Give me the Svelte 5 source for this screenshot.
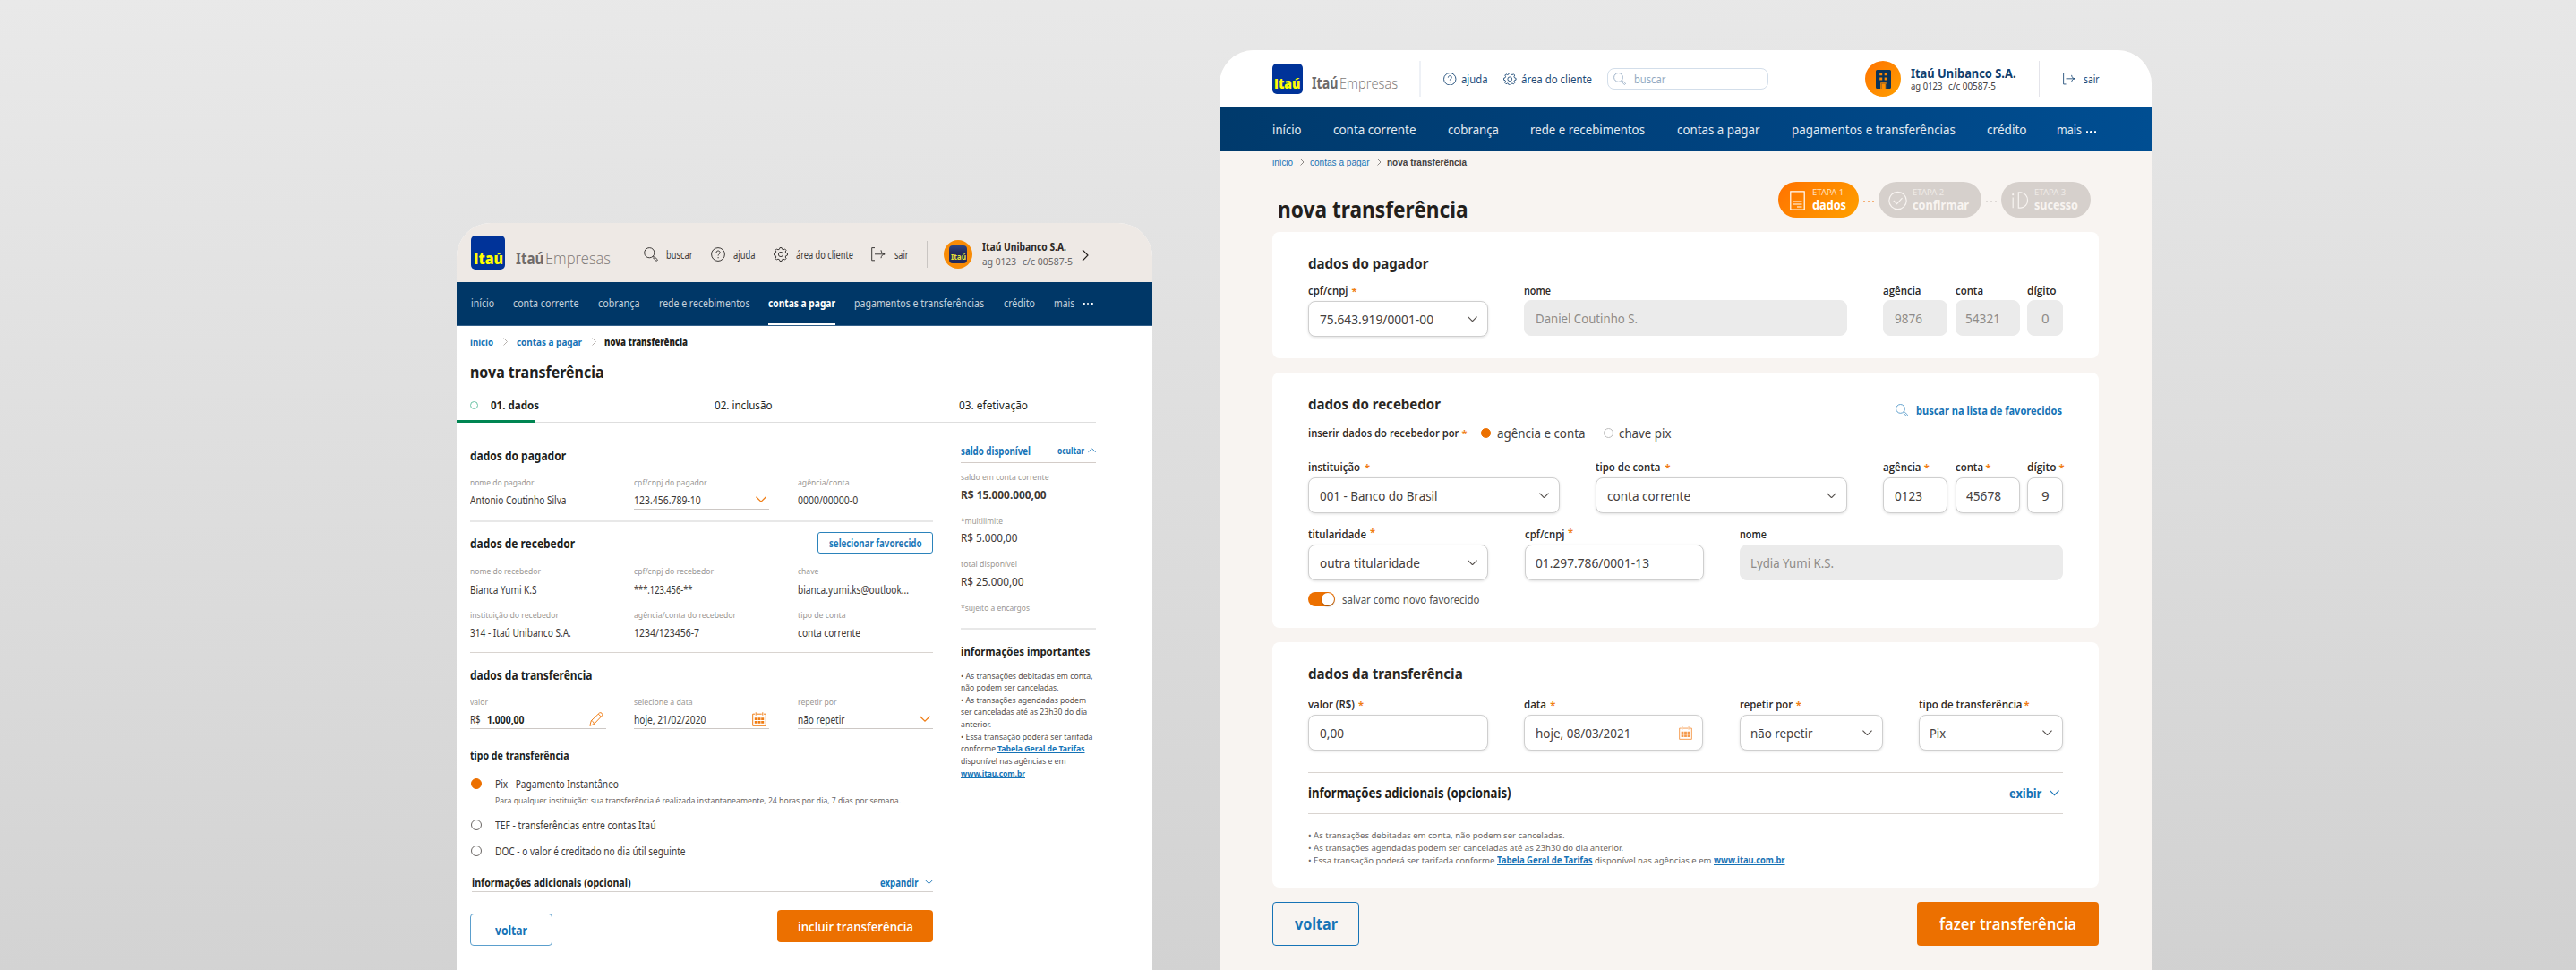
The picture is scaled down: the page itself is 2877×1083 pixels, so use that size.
<script>
  // estreita (ou alarga) o texto para ele ocupar a largura do layout
  const fit = (node, width) => {
    if (!width) return;
    node.style.width = 'max-content';
    const natural = node.getBoundingClientRect().width;
    node.style.transform = `scaleX(${width / natural})`;
    node.style.marginRight = `${width - natural}px`;
  };

  // contorno da engrenagem com 8 dentes
  const gear = Array.from({ length: 32 }, (_, i) => {
    const r = i % 4 < 2 ? 7.6 : 6;
    const shift = [-0.13, 0.13, 0.26, 0.53][i % 4];
    const a = (Math.floor(i / 4) * Math.PI) / 4 + shift;
    return `${(8 + r * Math.sin(a)).toFixed(2)},${(8 - r * Math.cos(a)).toFixed(2)}`;
  }).join(' ');

  const menu = [
    { name: 'início', w: 26, wide: 32.5 },
    { name: 'conta corrente', w: 73.5, wide: 92.5 },
    { name: 'cobrança', w: 46.5, wide: 57 },
    { name: 'rede e recebimentos', w: 101.5, wide: 128 },
    { name: 'contas a pagar', w: 75, wide: 92.5, active: true },
    { name: 'pagamentos e transferências', w: 145, wide: 183 },
    { name: 'crédito', w: 35, wide: 44.6 },
    { name: 'mais', w: 23.3, wide: 28 }
  ];

  const payer = [
    { label: 'nome do pagador', lw: 71.4, value: 'Antonio Coutinho Silva', w: 107.5 },
    { label: 'cpf/cnpj do pagador', lw: 81.5, value: '123.456.789-10', w: 74.7, icon: 'down' },
    { label: 'agência/conta', lw: 57.5, value: '0000/00000-0', w: 67.2 }
  ];
  const receiver = [
    { label: 'nome do recebedor', lw: 79, value: 'Bianca Yumi K.S', w: 74.5 },
    { label: 'cpf/cnpj do recebedor', lw: 89, value: '***.123.456-**', w: 65.5 },
    { label: 'chave', lw: 23.3, value: 'bianca.yumi.ks@outlook...', w: 124 }
  ];
  const receiverBank = [
    { label: 'instituição do recebedor', lw: 99, value: '314 - Itaú Unibanco S.A.', w: 112.8 },
    { label: 'agência/conta do recebedor', lw: 114, value: '1234/123456-7', w: 73 },
    { label: 'tipo de conta', lw: 53.6, value: 'conta corrente', w: 70 }
  ];
  const transfer = [
    { label: 'valor', lw: 20, prefix: 'R$', value: '1.000,00', w: 41.5, icon: 'pencil' },
    { label: 'selecione a data', lw: 65.7, value: 'hoje, 21/02/2020', w: 80.3, icon: 'calendar' },
    { label: 'repetir por', lw: 43.6, value: 'não repetir', w: 52.5, icon: 'down' }
  ];
  const balance = [
    { label: 'saldo em conta corrente', lw: 98.5, value: 'R$ 15.000.000,00', w: 95.5, strong: true },
    { label: '*multilimite', lw: 47, value: 'R$ 5.000,00', w: 63.5 },
    { label: 'total disponível', lw: 63, value: 'R$ 25.000,00', w: 70.5 }
  ];

  const steps = [
    { n: 1, name: 'dados', nw: 38, w: 90.5, active: true },
    { n: 2, name: 'confirmar', nw: 63, w: 115 },
    { n: 3, name: 'sucesso', nw: 49, w: 100 }
  ];

  const payerForm = [
    [{ label: 'cpf/cnpj', lw: 44.5, req: 4, value: '75.643.919/0001-00', vw: 127, w: 201, icon: 'down' }],
    [{ label: 'nome', lw: 30, value: 'Daniel Coutinho S.', vw: 114, w: 361, off: true }],
    [
      { label: 'agência', lw: 42.5, value: '9876', vw: 31, w: 72, off: true },
      { label: 'conta', lw: 31, value: '54321', vw: 39, w: 72, off: true, pad: 10 },
      { label: 'dígito', lw: 32.5, value: '0', w: 40, off: true, pad: 15 }
    ]
  ];
  const bankForm = [
    [{ label: 'instituição', lw: 58, req: 5, value: '001 - Banco do Brasil', vw: 131.5, w: 281, icon: 'down' }],
    [{ label: 'tipo de conta', lw: 72.5, req: 5, value: 'conta corrente', vw: 93, w: 281, icon: 'down', pad: 11.5 }],
    [
      { label: 'agência', lw: 42.5, req: 3, value: '0123', vw: 31, w: 72, pad: 11.5 },
      { label: 'conta', lw: 31, req: 3, value: '45678', vw: 39, w: 72, pad: 11.5 },
      { label: 'dígito', lw: 32.5, req: 3, value: '9', w: 40, pad: 15 }
    ]
  ];
  const ownerForm = [
    [{ label: 'titularidade', lw: 65, req: 4, up: true, value: 'outra titularidade', vw: 112, w: 201, icon: 'down' }],
    [{ label: 'cpf/cnpj', lw: 44.5, req: 4, up: true, value: '01.297.786/0001-13', vw: 127, w: 200 }],
    [{ label: 'nome', lw: 30, value: 'Lydia Yumi K.S.', vw: 93, w: 361, off: true, pad: 11 }]
  ];
  const transferForm = [
    [{ label: 'valor (R$)', lw: 52, req: 4, value: '0,00', vw: 27, w: 201 }],
    [{ label: 'data', lw: 25, req: 4, value: 'hoje, 08/03/2021', vw: 106.5, w: 200, icon: 'calendar' }],
    [{ label: 'repetir por', lw: 59, req: 4, value: 'não repetir', vw: 69.5, w: 160, icon: 'down' }],
    [{ label: 'tipo de transferência', lw: 115.5, req: 2, value: 'Pix', vw: 18, w: 161, icon: 'down' }]
  ];
</script>

{#snippet icon(name, size)}
  <svg class="icon" width={size} height={size} viewBox="0 0 16 16">
    {#if name === 'search'}
      <circle cx="6.3" cy="6.2" r="5.6" />
      <path d="M10.3 10.2l1 1M11.9 10.6l3.6 3.4-1.4 1.5-3.6-3.6z" />
    {:else if name === 'help'}
      <circle cx="8" cy="8" r="7.4" />
      <path d="M5.9 6.2c0-3 4.3-2.8 4.3-.2 0 1.7-2.1 1.8-2.1 3.5M8.1 11v1.3" />
    {:else if name === 'gear'}
      <circle cx="8" cy="8" r="2.6" />
      <polygon points={gear} />
    {:else if name === 'exit'}
      <path d="M4 .6H.7v14.2H4M4 7.8h11M11 3.3c.2 2.6 1.5 4 4.2 4.5-2.7.4-4 1.9-4.2 4.4" />
    {:else if name === 'pencil'}
      <path d="M.8 15.3l1.5-5.6L11.6.9c1.6-1 3.9 1 3 2.9L5.4 13.5zM2.3 9.7c1.7.2 2.9 1.6 3.1 3.8M10.3 2.1l3 3" />
    {:else if name === 'calendar'}
      <path d="M3 2.2H.7v13.1h14.6V2.2H13M5.3 2.2h5.4M4.2.3v3.4M11.8.3v3.4" />
      <path class="fill" d="M2.8 6.2h3v2.9h-3zM6.5 6.2h3v2.9h-3zM10.2 6.2h3v2.9h-3zM2.8 9.9h3v2.9h-3zM6.5 9.9h3v2.9h-3zM10.2 9.9h3v2.9h-3z" />
    {/if}
  </svg>
{/snippet}

{#snippet chevron(dir, w)}
  <svg class="icon {dir}" width={w} height={w * 0.6} viewBox="0 0 10 6">
    <path d="M.4.6l4.6 4.6L9.6.6" />
  </svg>
{/snippet}

{#snippet detail(f)}
  <div class="detail">
    <div class="cap"><span use:fit={f.lw}>{f.label}</span></div>
    <div class="val" class:line={f.icon}>
      {#if f.prefix}<div class="prefix"><span use:fit={11.5}>{f.prefix}</span></div>{/if}
      <span class:strong={f.prefix} use:fit={f.w}>{f.value}</span>
      {#if f.icon === 'down'}
        <i class="orange">{@render chevron('down', 12)}</i>
      {:else if f.icon}
        <i class="orange">{@render icon(f.icon, 16)}</i>
      {/if}
    </div>
  </div>
{/snippet}

{#snippet formRow(groups)}
  <div class="form-row">
    {#each groups as group}
      <div class="group">
        {#each group as f}
          <div class="field" class:off={f.off} style="width:{f.w}px">
            <div class="label" class:up={f.up}>
              <span use:fit={f.lw}>{f.label}</span>
              {#if f.req}<em style="margin-left:{f.req}px">*</em>{/if}
            </div>
            <div class="box" style="padding-left:{f.pad ?? 11.5}px">
              <span use:fit={f.vw}>{f.value}</span>
              {#if f.icon === 'down'}
                <i>{@render chevron('down', 11)}</i>
              {:else if f.icon}
                <i class="orange">{@render icon(f.icon, 15)}</i>
              {/if}
            </div>
          </div>
        {/each}
      </div>
    {/each}
  </div>
{/snippet}

<main>
  <section class="old">
    <header>
      <div class="logo"><span use:fit={33}>Itaú</span></div>
      <div class="brand"><b use:fit={31.5}>Itaú</b><div><span use:fit={73}>Empresas</span></div></div>
      <div class="tools">
        <a>{@render icon('search', 16)}<span use:fit={29.5}>buscar</span></a>
        <a>{@render icon('help', 16)}<span use:fit={24.5}>ajuda</span></a>
        <a>{@render icon('gear', 16)}<span use:fit={64}>área do cliente</span></a>
        <a>{@render icon('exit', 16)}<span use:fit={15.5}>sair</span></a>
      </div>
      <div class="account">
        <div class="avatar"><div class="mini"><span use:fit={17}>Itaú</span></div></div>
        <div class="who">
          <b use:fit={94}>Itaú Unibanco S.A.</b>
          <div><span use:fit={38}>ag 0123</span><span use:fit={56}>c/c 00587-5</span></div>
        </div>
        <svg class="icon" width="8" height="14" viewBox="0 0 8 14"><path d="M1 .8l6 6.2-6 6.2" /></svg>
      </div>
    </header>
    <nav>
      {#each menu as m}
        <a class:active={m.active}><span use:fit={m.w}>{m.name}</span></a>
      {/each}
      <div class="dots"><u></u><u></u><u></u></div>
    </nav>
    <div class="crumbs">
      <a use:fit={26}>início</a>
      <svg class="icon" width="5" height="9" viewBox="0 0 5 9"><path d="M.5.5l4 4-4 4" /></svg>
      <a use:fit={73}>contas a pagar</a>
      <svg class="icon" width="5" height="9" viewBox="0 0 5 9"><path d="M.5.5l4 4-4 4" /></svg>
      <b use:fit={93}>nova transferência</b>
    </div>
    <h1><span use:fit={149.5}>nova transferência</span></h1>
    <div class="tabs">
      <div class="tab"><s></s><b use:fit={54}>01. dados</b></div>
      <div class="tab"><span use:fit={64.5}>02. inclusão</span></div>
      <div class="tab"><span use:fit={77}>03. efetivação</span></div>
    </div>
    <div class="track"><div></div></div>

    <div class="cols">
      <div class="left">
        <h2><span use:fit={107}>dados do pagador</span></h2>
        <div class="details">{#each payer as f}{@render detail(f)}{/each}</div>
        <hr class="thick" />
        <div class="head">
          <h2><span use:fit={117}>dados de recebedor</span></h2>
          <button class="pick"><span use:fit={103.5}>selecionar favorecido</span></button>
        </div>
        <div class="details second">{#each receiver as f}{@render detail(f)}{/each}</div>
        <div class="details third">{#each receiverBank as f}{@render detail(f)}{/each}</div>
        <hr />
        <h2 class="h-transfer"><span use:fit={136.5}>dados da transferência</span></h2>
        <div class="details">{#each transfer as f}{@render detail(f)}{/each}</div>
        <h3><span use:fit={110.5}>tipo de transferência</span></h3>
        <div class="radio"><s class="on"></s><span use:fit={138}>Pix - Pagamento Instantâneo</span></div>
        <p class="hint"><span use:fit={453}>Para qualquer instituição: sua transferência é realizada instantaneamente, 24 horas por dia, 7 dias por semana.</span></p>
        <div class="radio tef"><s></s><span use:fit={179.5}>TEF - transferências entre contas Itaú</span></div>
        <div class="radio doc"><s></s><span use:fit={212.5}>DOC - o valor é creditado no dia útil seguinte</span></div>
        <div class="more">
          <b use:fit={177.5}>informações adicionais (opcional)</b>
          <a><span use:fit={42.5}>expandir</span>{@render chevron('down', 9)}</a>
        </div>
        <div class="buttons">
          <button class="back"><span use:fit={36}>voltar</span></button>
          <button class="go"><span use:fit={129}>incluir transferência</span></button>
        </div>
      </div>

      <aside>
        <div class="aside-head">
          <b use:fit={78}>saldo disponível</b>
          <a><span use:fit={30}>ocultar</span>{@render chevron('flip', 9)}</a>
        </div>
        {#each balance as b}
          <div class="balance">
            <div class="cap"><span use:fit={b.lw}>{b.label}</span></div>
            <div class="money" class:strong={b.strong}><span use:fit={b.w}>{b.value}</span></div>
          </div>
        {/each}
        <div class="balance"><div class="cap"><span use:fit={77}>*sujeito a encargos</span></div></div>
        <hr class="thick" />
        <h4><span use:fit={144.5}>informações importantes</span></h4>
        <p>
          <span use:fit={147.5}>• As transações debitadas em conta,</span><br />
          <span use:fit={109.5}>não podem ser canceladas.</span><br />
          <span use:fit={140}>• As transações agendadas podem</span><br />
          <span use:fit={141}>ser canceladas até as 23h30 do dia</span><br />
          <span use:fit={34}>anterior.</span><br />
          <span use:fit={147.5}>• Essa transação poderá ser tarifada</span><br />
          <span use:fit={39}>conforme</span> <a use:fit={97.5}>Tabela Geral de Tarifas</a><br />
          <span use:fit={117.5}>disponível nas agências e em</span><br />
          <a use:fit={72}>www.itau.com.br</a>
        </p>
      </aside>
    </div>
  </section>

  <section class="new">
    <header>
      <div class="logo"><span use:fit={29.5}>Itaú</span></div>
      <div class="brand"><b use:fit={29.5}>Itaú</b><div><span use:fit={65}>Empresas</span></div></div>
      <div class="tools">
        <a>{@render icon('help', 14.5)}<span use:fit={29.5}>ajuda</span></a>
        <a>{@render icon('gear', 14.5)}<span use:fit={79}>área do cliente</span></a>
        <div class="search">{@render icon('search', 14)}<span use:fit={35.3}>buscar</span></div>
      </div>
      <div class="account">
        <div class="avatar">
          <svg width="17" height="21" viewBox="0 0 17 21">
            <path fill="#0b3359" fill-rule="evenodd" d="M1.5 0h14a1.5 1.5 0 0 1 1.5 1.5v18a1.5 1.5 0 0 1-1.5 1.5h-3v-5.5h-6V21h-5A1.5 1.5 0 0 1 0 19.5v-18A1.5 1.5 0 0 1 1.5 0zM4.2 3.3v3h3v-3zM9.7 3.3v3h3v-3zM4.2 8.5v3h3v-3zM9.7 8.5v3h3v-3zM5.2 14.3V21h1v-5.7h4.6V21h1v-6.7z" />
          </svg>
        </div>
        <div class="who">
          <b use:fit={117.5}>Itaú Unibanco S.A.</b>
          <div><span use:fit={35.5}>ag 0123</span><span use:fit={53}>c/c 00587-5</span></div>
        </div>
        <a class="leave">{@render icon('exit', 14)}<span use:fit={17.5}>sair</span></a>
      </div>
    </header>
    <nav>
      {#each menu as m}
        <a><span use:fit={m.wide}>{m.name}</span></a>
      {/each}
      <div class="dots"><u></u><u></u><u></u></div>
    </nav>
    <div class="body">
      <div class="crumbs">
        <a use:fit={23}>início</a>
        <svg class="icon" width="5" height="8" viewBox="0 0 5 8"><path d="M.5.5L4 4 .5 7.5" /></svg>
        <a use:fit={66.5}>contas a pagar</a>
        <svg class="icon" width="5" height="8" viewBox="0 0 5 8"><path d="M.5.5L4 4 .5 7.5" /></svg>
        <b use:fit={89}>nova transferência</b>
      </div>
      <div class="top">
        <h1><span use:fit={212.5}>nova transferência</span></h1>
        <div class="steps">
          {#each steps as s}
            {#if s.n > 1}
              <div class="between" class:hot={s.n === 2}><u></u><u></u><u></u></div>
            {/if}
            <div class="step" class:active={s.active} style="width:{s.w}px">
              {#if s.n === 1}
                <svg class="icon" width="17" height="22" viewBox="0 0 17 22"><path d="M.8.8h15.4v20.4H.8zM4 12h9.5M4 15h9.5M8 18h5.5" /></svg>
              {:else if s.n === 2}
                <svg class="icon" width="21" height="22" viewBox="0 0 21 22"><circle cx="10.5" cy="11" r="9.7" /><path d="M5.8 11l3.7 3.7 6-6.5" /></svg>
              {:else}
                <svg class="icon" width="20" height="19" viewBox="0 0 20 19"><path d="M8.3.8H11c4.5.4 7.5 4 7.5 8.7s-3 8.3-7.5 8.7H8.3zM2.2 6.5v11.7" /><circle class="fill" cx="2.2" cy="3.2" r="1.1" /></svg>
              {/if}
              <div>
                <small use:fit={35.3}>ETAPA {s.n}</small>
                <b use:fit={s.nw}>{s.name}</b>
              </div>
            </div>
          {/each}
        </div>
      </div>

      <div class="card payer">
        <h2><span use:fit={134.5}>dados do pagador</span></h2>
        {@render formRow(payerForm)}
      </div>

      <div class="card receiver">
        <div class="receiver-head">
          <div>
            <h2><span use:fit={148}>dados do recebedor</span></h2>
            <div class="choose">
              <b use:fit={168.5}>inserir dados do recebedor por</b><em>*</em>
              <s class="on"></s><span use:fit={98.5}>agência e conta</span>
              <s></s><span use:fit={58.5}>chave pix</span>
            </div>
          </div>
          <a>{@render icon('search', 14)}<span use:fit={163}>buscar na lista de favorecidos</span></a>
        </div>
        {@render formRow(bankForm)}
        {@render formRow(ownerForm)}
        <div class="save"><div class="toggle"><div></div></div><span use:fit={153.5}>salvar como novo favorecido</span></div>
      </div>

      <div class="card transfer">
        <h2><span use:fit={172.7}>dados da transferência</span></h2>
        {@render formRow(transferForm)}
        <div class="extra">
          <b use:fit={226.5}>informações adicionais (opcionais)</b>
          <a><span use:fit={36.3}>exibir</span>{@render chevron('down', 11)}</a>
        </div>
        <p>
          <span use:fit={286.5}>• As transações debitadas em conta, não podem ser canceladas.</span><br />
          <span use:fit={352}>• As transações agendadas podem ser canceladas até as 23h30 do dia anterior.</span><br />
          <span use:fit={208.5}>• Essa transação poderá ser tarifada conforme</span>
          <a use:fit={106.5}>Tabela Geral de Tarifas</a>
          <span use:fit={130.5}>disponível nas agências e em</span>
          <a use:fit={79.5}>www.itau.com.br</a>
        </p>
      </div>

      <div class="actions">
        <button class="back"><span use:fit={48}>voltar</span></button>
        <button class="go"><span use:fit={153}>fazer transferência</span></button>
      </div>
    </div>
  </section>
</main>

<style>
  :global(body) { margin: 0; }

  main {
    box-sizing: border-box;
    width: 2877px;
    height: 1083px;
    overflow: hidden;
    display: flex;
    align-items: flex-start;
    padding-left: 510px;
    background: linear-gradient(178deg, #e9e9e9, #d1d1d1);
    font-family: "Noto Sans", "Open Sans", sans-serif;
    color: #231f1c;
  }

  main :global(*) { box-sizing: border-box; }

  h1, h2, h3, h4, p { margin: 0; }
  span, b, small, p a, .crumbs a { display: inline-block; white-space: nowrap; flex: none; transform-origin: 0 50%; }

  s, u, i, em { text-decoration: none; font-style: normal; flex: none; }
  i { display: flex; margin-left: auto; }
  a { color: #1673b6; flex: none; }
  button { display: flex; align-items: center; justify-content: center; font-family: inherit; padding: 0; }
  hr { border: 0; margin: 0; height: 1px; background: #d9d4d0; }
  .thick { height: 2px; background: #e8e8e8; }

  .icon { fill: none; stroke: currentColor; stroke-width: 1; flex: none; display: block; }
  .icon .fill { fill: currentColor; stroke: none; }
  .flip { transform: scaleY(-1); }
  .orange { color: #f07d14; }
  .strong { font-weight: 700; color: #231f1c; }

  .logo {
    display: flex;
    justify-content: center;
    background: #003399;
    color: #ffff00;
    font-weight: 800;
    font-family: "Open Sans", sans-serif;
    flex: none;
  }

  .brand { display: flex; flex: none; color: #6f6b6a; }
  .brand div { margin-left: 1.5px; font-family: "Open Sans", sans-serif; font-weight: 300; color: #7d7978; }

  header, nav, .tools, .tools a, .account, .crumbs { display: flex; align-items: center; }
  .account { flex: none; }
  .who { display: flex; flex-direction: column; align-items: flex-start; flex: none; }
  .who > div { display: flex; }
  nav a { color: inherit; }
  .dots { display: flex; gap: 2px; }
  .dots u { width: 2.5px; height: 2.5px; border-radius: 50%; background: #fff; }

  /* janela da versão anterior */
  .old {
    width: 776.5px;
    height: 834px;
    margin-top: 249px;
    flex: none;
    background: #fff;
    border-radius: 38px 38px 0 0;
    overflow: hidden;
  }

  .old header { height: 66px; padding: 0 0 0 16px; background: #eee9e5; }
  .old .logo { width: 38px; height: 38px; border-radius: 5px; margin-top: -1px; font-size: 17.5px; line-height: 50px; }
  .old .brand { margin-left: 11.5px; padding-top: 11px; font-size: 18.5px; line-height: 24px; }
  .old .tools { margin-left: 37px; gap: 20px; color: #3d3a38; font-size: 11.7px; padding-top: 4px; }
  .old .tools a { color: inherit; gap: 9.5px; }
  .old .account { margin-left: 20.5px; border-left: 1px solid #c9c5c2; height: 30px; padding-left: 18.5px; margin-top: 3px; }
  .old .avatar { width: 32px; height: 32px; border-radius: 50%; background: #f88b06; display: flex; align-items: center; justify-content: center; flex: none; }
  .old .mini { width: 20px; height: 20px; border-radius: 4px; background: linear-gradient(#2c4583, #232a5c 40%); color: #e8e337; font-weight: 700; font-size: 8.5px; line-height: 25px; display: flex; justify-content: center; }
  .old .who { margin-left: 11px; font-size: 12.2px; line-height: 16px; color: #2d2926; width: 101px; padding-top: 1px; }
  .old .who > div { gap: 7px; font-size: 11px; color: #6b6765; }
  .old .account > .icon { margin-left: 10px; stroke-width: 1.2; margin-top: 3px; }

  .old nav { height: 48.5px; background: #003767; padding-left: 16px; gap: 21.2px; color: #c3d0dc; font-size: 12.2px; border-bottom: .5px solid #33608a; }
  .old nav a { height: 48px; line-height: 48px; border-bottom: 2px solid transparent; }
  .old nav .active { color: #fff; font-weight: 700; border-color: #fff; }
  .old nav .dots { margin-left: -12px; }

  .old .crumbs { height: 36px; padding-left: 15px; font-size: 11.4px; font-weight: 700; }
  .old .crumbs a { text-decoration: underline; text-underline-offset: 2px; }
  .old .crumbs .icon { margin: 0 9.5px 0 11px; color: #b5b0ac; }

  .old h1 { height: 31px; line-height: 31px; padding-left: 14.5px; font-size: 18px; }
  .tabs { display: flex; height: 38px; padding: 5px 0 0 15px; font-size: 12.6px; }
  .tab { display: flex; align-items: center; width: 273px; flex: none; }
  .tab:last-child { width: 100px; }
  .tab s { width: 9px; height: 9px; border: 1px solid #69c2a4; border-radius: 50%; margin-right: 14px; }
  .track { width: 714px; height: 3px; background: linear-gradient(transparent 66%, #dedede 66%); }
  .track div { width: 87px; height: 3px; background: #008552; }

  .cols { display: flex; }
  .left { width: 532px; padding-left: 15px; padding-top: 22px; flex: none; }
  .old h2 { height: 29px; line-height: 29px; font-size: 14.7px; }
  .cap { height: 16px; font-size: 9.8px; line-height: 16px; color: #9b9793; }
  .details { display: flex; margin-top: 8px; justify-content: space-between; }
  .details.second { margin-top: 12px; }
  .details.third { margin-top: 10.5px; margin-bottom: 11px; }
  .detail { width: 151.5px; height: 38px; }
  .val { display: flex; align-items: center; height: 22px; padding-top: 2px; border-bottom: 1px solid transparent; font-size: 11.8px; color: #3d3936; }
  .val.line { border-color: #cdc8c5; }
  .val i { padding-right: 3px; }
  .prefix { margin-right: 7px; }
  .left .thick { margin-top: 12px; }
  .head { display: flex; justify-content: space-between; align-items: center; height: 24px; margin-top: 11.5px; }
  .pick { width: 129.5px; height: 24px; border: 1px solid #2b83bb; border-radius: 3px; background: #fff; color: #1f79b8; font-size: 11.7px; font-weight: 700; line-height: 20px; }
  .h-transfer { margin-top: 10px; }
  h3 { height: 29px; margin-top: 15px; line-height: 29px; font-size: 12.7px; }
  .radio { display: flex; align-items: center; height: 18px; margin-top: 8px; font-size: 11.8px; color: #3d3936; }
  .radio s { width: 12px; height: 12px; border: 1px solid #6b6765; border-radius: 50%; margin: 0 15px 0 1px; }
  .radio s.on, .choose s.on { background: #ec7000; border-color: #ec7000; }
  .hint { height: 18px; line-height: 19px; padding-left: 28px; font-size: 9.7px; color: #6b6662; }
  .tef { margin-top: 10px; }
  .doc { margin-top: 11px; }
  .more { display: flex; align-items: center; justify-content: space-between; height: 22px; margin: 15px 0 0 2px; padding-top: 2px; border-bottom: 1px solid #d4d0cd; font-size: 12.9px; line-height: 17px; }
  .more a { display: flex; align-items: center; gap: 7.5px; font-size: 11.7px; font-weight: 700; }
  .buttons { display: flex; justify-content: space-between; align-items: flex-start; margin-top: 20px; }
  .back { border: 1px solid #1673b6; color: #1673b6; background: transparent; border-radius: 4px; font-weight: 700; }
  .go { border: 0; background: #ec7000; color: #fff; border-radius: 4px; font-weight: 600; font-family: "Open Sans", sans-serif; }
  .old .back { width: 92px; height: 36.5px; margin-top: 4px; font-size: 14.5px; border-color: #5b9fcd; background: #fff; }
  .old .go { width: 174px; height: 36.5px; font-size: 14.7px; }

  aside { width: 168px; height: 490px; margin: 18px 0 0 14px; padding-left: 16px; border-left: 1px solid #f3eee8; }
  .aside-head { display: flex; align-items: center; justify-content: space-between; height: 27px; padding-top: 1px; border-bottom: 1px solid #d3ccc8; color: #1673b6; font-size: 11.7px; }
  .aside-head a { display: flex; align-items: center; gap: 4px; font-weight: 700; font-size: 10.2px; }
  .balance { display: flex; flex-direction: column; gap: 2.5px; margin-top: 12px; }
  .balance:nth-child(2) { margin-top: 8.5px; }
  .money { height: 18px; font-size: 12.6px; line-height: 18px; color: #3d3936; }
  aside hr { margin-top: 14px; }
  h4 { margin-top: 14px; height: 20px; line-height: 20px; font-size: 13.2px; }
  aside p { margin-top: 11px; font-size: 9.5px; line-height: 13.65px; color: #55504d; white-space: nowrap; }
  p span, p a { vertical-align: top; }
  p a { font-weight: 700; text-decoration: underline; text-underline-offset: 1px; }

  /* janela da versão nova */
  .new {
    width: 1040.5px;
    height: 1027px;
    margin: 56px 0 0 75.5px;
    flex: none;
    background: #f8f4f1;
    border-radius: 38px 38px 0 0;
    overflow: hidden;
  }

  .new header { height: 64px; background: #fff; padding-left: 59px; }
  .new .logo { width: 34px; height: 34px; border-radius: 5px; font-size: 15.8px; line-height: 45px; }
  .new .brand { margin-left: 10px; padding-top: 9px; font-size: 17px; line-height: 22px; }
  .new .tools { margin-left: 24px; border-left: 2px solid #eef1f6; height: 40px; padding-left: 25px; color: #1d4a77; font-size: 12.7px; flex: none; }
  .new .tools a { color: inherit; gap: 5px; margin-right: 18px; }
  .search { display: flex; align-items: center; width: 180.5px; height: 24px; border: 1px solid #d3deea; border-radius: 8px; padding-left: 6px; gap: 9px; color: #93a9c1; margin-left: -1px; }
  .new .account { margin-left: 108px; }
  .new .avatar { width: 40px; height: 40px; border-radius: 50%; background: linear-gradient(135deg, #ff7200, #ffa000); display: flex; align-items: center; justify-content: center; }
  .new .who { margin-left: 10.5px; width: 119px; color: #0f3f70; font-size: 14.2px; line-height: 16px; padding-bottom: 1px; }
  .new .who > div { gap: 7px; font-size: 10.5px; line-height: 12px; color: #45413f; }
  .leave { display: flex; align-items: center; gap: 9px; height: 40px; margin-left: 24px; padding-left: 26px; border-left: 1px solid #e4e4ea; font-size: 12.6px; color: #1d4a77; }

  .new nav { height: 48.5px; padding-left: 58.5px; gap: 35.5px; background: linear-gradient(90deg, #003a6c, #00427e 50%, #004e92); font-size: 14.8px; }
  .new nav a { color: #e3eaf1; }
  .new nav .dots { margin: 6px 0 0 -31px; }
  .new nav a:nth-child(8) { margin-left: -2px; }

  .body { padding: 0 58.5px 0 59px; }
  .new .crumbs { height: 25px; font-family: "Liberation Sans", Arial, sans-serif; font-size: 10.3px; }
  .new .crumbs .icon { margin: 0 6px 0 8px; color: #8d8986; }
  .new .crumbs b { color: #45413f; }
  .top { display: flex; justify-content: space-between; height: 65.5px; }
  .top h1 { margin: 25px 0 0 5.5px; font-size: 24.3px; line-height: 30px; height: 30px; }
  .steps { display: flex; align-items: center; height: 40.5px; margin: 9px 9px 0 0; }
  .step { display: flex; align-items: center; height: 40.5px; border-radius: 20px; background: #d6d0cc; color: #f8f4f1; padding-left: 11px; flex: none; }
  .step.active { background: linear-gradient(135deg, #ff7200, #ffa000); color: #fff; padding-left: 13px; }
  .step .icon { margin: 2px 6px 0 0; stroke-width: 1.2; }
  .step.active .icon { margin-right: 8px; }
  .step div { display: flex; flex-direction: column; align-items: flex-start; }
  .step small { font-size: 9.6px; line-height: 11px; opacity: .75; }
  .step b { font-size: 14px; line-height: 17px; }
  .between { display: flex; justify-content: center; gap: 3px; width: 22px; padding-top: 4px; }
  .between u { width: 2px; height: 2px; border-radius: 50%; background: #d6d0cc; }
  .between.hot u { background: #f59a4c; }

  .card { background: #fff; border-radius: 8px; padding: 25px 40px 0; margin-bottom: 16px; }
  .card h2 { height: 20px; line-height: 20px; font-size: 16px; color: #2b2724; }
  .card.payer { height: 141px; }
  .card.receiver { height: 285px; }
  .card.transfer { height: 274px; }

  .form-row { display: flex; justify-content: space-between; }
  .group { display: flex; gap: 8.4px; }
  .label { display: flex; height: 21px; line-height: 20px; font-family: "Open Sans", sans-serif; font-weight: 600; font-size: 12.3px; color: #2b2724; }
  .label em, .choose em { color: #f07d14; font-size: 11px; font-weight: 700; }
  .label.up em { margin-top: -3px; }
  .box { display: flex; align-items: center; height: 40px; border: 1px solid #cfcfcf; border-radius: 8px; padding-right: 11px; box-shadow: 0 1px 3px rgba(0, 0, 0, .12); font-size: 15.1px; color: #45403d; background: #fff; }
  .box i { color: #55504d; }
  .box i.orange { color: #f59a4c; }
  .off .box { background: #ebebeb; border-color: #ebebeb; box-shadow: none; color: #8f8b88; }
  .payer .form-row { margin-top: 11px; }
  .payer .off .label { height: 20px; line-height: 19px; }

  .receiver-head { display: flex; justify-content: space-between; align-items: flex-start; }
  .receiver-head > a { display: flex; align-items: center; gap: 9.5px; height: 20px; margin: 7px 1px 0 0; font-size: 12.4px; font-weight: 700; }
  .receiver-head > a .icon { opacity: .75; }
  .choose { display: flex; align-items: center; height: 20px; margin-top: 12px; font-size: 14.5px; color: #45403d; }
  .choose b { font-size: 12.3px; font-weight: 600; font-family: "Open Sans", sans-serif; color: #2b2724; }
  .choose em { margin-left: 3px; width: 4px; }
  .choose s { width: 11px; height: 11px; border: 1px solid #bdbdbd; border-radius: 50%; margin: 0 6.5px 0 20.5px; }
  .choose s.on { margin-left: 17.5px; }
  .receiver .form-row { margin-top: 19px; }
  .receiver .form-row + .form-row { margin-top: 14px; }
  .save { display: flex; align-items: center; gap: 8px; margin-top: 13px; height: 16px; font-size: 13.2px; color: #55504d; }
  .toggle { display: flex; justify-content: flex-end; width: 30px; height: 16px; border-radius: 8px; background: #ec7000; padding: 1px; }
  .toggle div { width: 14px; height: 14px; border-radius: 50%; background: #fff; box-shadow: 0 1px 2px rgba(0, 0, 0, .4); }

  .transfer .form-row { margin-top: 15px; }
  .extra { display: flex; align-items: center; justify-content: space-between; height: 47.5px; margin-top: 23.5px; border: solid #d9d4d0; border-width: 1.5px 0; font-size: 15.3px; padding-right: 4px; }
  .extra a { display: flex; align-items: center; gap: 8.5px; font-weight: 700; font-size: 15px; }
  .card p { margin-top: 16.5px; font-size: 9.8px; line-height: 14px; color: #6b6662; white-space: nowrap; }

  .actions { display: flex; justify-content: space-between; }
  .actions button { height: 48.5px; font-size: 18px; }
  .actions .back { width: 97px; }
  .actions .go { width: 203px; }
</style>
